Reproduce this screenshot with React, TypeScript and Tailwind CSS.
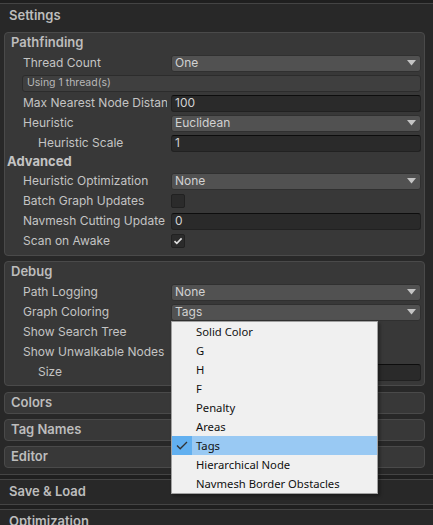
import { ReactNode } from 'react'

const LABEL = 'text-[12px] text-[#c4c4c4]'

function Arrow() {
  return (
    <svg width="9" height="6" viewBox="0 0 9 6" className="shrink-0">
      <polygon points="0,0 9,0 4.5,5.5" fill="#c4c4c4" />
    </svg>
  )
}

function Dropdown({ value }: { value: string }) {
  return (
    <div className="flex h-[17px] flex-1 items-center justify-between rounded-[3px] border border-[#303030] bg-[#515151] pl-[3px] pr-[4px]">
      <span className="text-[12px] leading-none text-[#d2d2d2]">{value}</span>
      <Arrow />
    </div>
  )
}

function TextField({ value }: { value: string }) {
  return (
    <div className="flex h-[17px] flex-1 items-center rounded-[3px] border border-[#212121] border-t-[#0d0d0d] bg-[#2a2a2a] pl-[3px]">
      <span className="text-[12px] leading-none text-[#d2d2d2]">{value}</span>
    </div>
  )
}

function Checkbox({ checked }: { checked?: boolean }) {
  return (
    <div className="flex h-[14px] w-[14px] items-center justify-center rounded-[2px] border border-[#212121] bg-[#2b2b2b]">
      {checked && (
        <svg width="10" height="8" viewBox="0 0 10 8">
          <polyline
            points="1.5,4.2 3.8,6.4 8.6,1.4"
            fill="none"
            stroke="#e0e0e0"
            strokeWidth="1.6"
          />
        </svg>
      )}
    </div>
  )
}

function Row({
  label,
  indent = 18,
  children
}: {
  label: string
  indent?: number
  children: ReactNode
}) {
  return (
    <div className="flex h-5 items-center pr-[3px]">
      <div className="w-[166px] shrink-0 pr-[4px]">
        <div
          className={`overflow-hidden whitespace-nowrap ${LABEL} ${
            indent === 33 ? 'pl-[33px]' : 'pl-[18px]'
          }`}
        >
          {label}
        </div>
      </div>
      <div className="flex flex-1 items-center">{children}</div>
    </div>
  )
}

function Box({ title, children }: { title: string; children?: ReactNode }) {
  return (
    <div className="mr-2 ml-1 rounded-[4px] border border-[#4a4a4a] bg-[#383838]">
      <div className="flex h-5 items-center pl-[6px] text-[13px] font-semibold text-[#bdbdbd]">
        {title}
      </div>
      {children}
    </div>
  )
}

function Separator() {
  return <div className="h-[6px] border-y border-[#444444] bg-[#1f1f1f]" />
}

function SectionHeader({ title }: { title: string }) {
  return (
    <div className="flex h-6 items-center pl-[9px] text-[13px] font-semibold text-[#bdbdbd]">
      {title}
    </div>
  )
}

const MENU = [
  'Solid Color',
  'G',
  'H',
  'F',
  'Penalty',
  'Areas',
  'Tags',
  'Hierarchical Node',
  'Navmesh Border Obstacles'
]

export default function App() {
  return (
    <div
      className="relative h-[525px] w-[433px] overflow-hidden bg-[#282828]"
      style={{ fontFamily: 'Inter, "Noto Sans", sans-serif' }}
    >
      <div className="h-[4px] border-b border-[#444444] bg-[#1f1f1f]" />
      <SectionHeader title="Settings" />

      <div className="flex flex-col pt-1 pb-[6px]">
        {/* Pathfinding */}
        <Box title="Pathfinding">
          <div className="pb-1">
            <Row label="Thread Count">
              <Dropdown value="One" />
            </Row>
            <div className="flex h-5 items-center pr-[3px] pl-[17px]">
              <div className="flex h-[17px] flex-1 items-center rounded-[3px] border border-[#2c2c2c] bg-[#3f3f3f] pl-[4px] text-[10.5px] text-[#b8b8b8]">
                Using 1 thread(s)
              </div>
            </div>
            <Row label="Max Nearest Node Distance">
              <TextField value="100" />
            </Row>
            <Row label="Heuristic">
              <Dropdown value="Euclidean" />
            </Row>
            <Row label="Heuristic Scale" indent={33}>
              <TextField value="1" />
            </Row>
            <div className="flex h-[18px] items-center pl-[2px] text-[13px] font-bold text-[#c4c4c4]">
              Advanced
            </div>
            <Row label="Heuristic Optimization">
              <Dropdown value="None" />
            </Row>
            <Row label="Batch Graph Updates">
              <Checkbox />
            </Row>
            <Row label="Navmesh Cutting Update">
              <TextField value="0" />
            </Row>
            <Row label="Scan on Awake">
              <Checkbox checked />
            </Row>
          </div>
        </Box>

        {/* Debug */}
        <div className="mt-[5px]">
          <Box title="Debug">
            <div className="pb-[3px]">
              <Row label="Path Logging">
                <Dropdown value="None" />
              </Row>
              <Row label="Graph Coloring">
                <Dropdown value="Tags" />
              </Row>
              <Row label="Show Search Tree">
                <Checkbox />
              </Row>
              <Row label="Show Unwalkable Nodes">
                <Checkbox checked />
              </Row>
              <Row label="Size" indent={33}>
                <TextField value="0.3" />
              </Row>
            </div>
          </Box>
        </div>

        <div className="mt-[6px] flex flex-col gap-[5px]">
          <Box title="Colors" />
          <Box title="Tag Names" />
          <Box title="Editor" />
        </div>
      </div>

      <Separator />
      <SectionHeader title="Save & Load" />
      <Separator />
      <SectionHeader title="Optimization" />

      {/* Graph Coloring popup */}
      <div
        className="absolute top-[321px] left-[171px] w-[207px] border border-[#a0a0a0] bg-[#f0f0f0] shadow-[2px_2px_3px_rgba(0,0,0,0.35)]"
        style={{ fontFamily: '"Noto Sans", sans-serif' }}
      >
        {MENU.map((item) => {
          const selected = item === 'Tags'
          return (
            <div
              key={item}
              className={`flex h-[19px] items-center ${selected ? 'bg-[#99c9f3]' : ''}`}
            >
              <div
                className={`flex h-full w-[20px] shrink-0 items-center justify-center ${
                  selected ? 'bg-[#62b0f0]' : ''
                }`}
              >
                {selected && (
                  <svg width="12" height="9" viewBox="0 0 12 9">
                    <polyline
                      points="1,4.5 4.2,7.8 11,1"
                      fill="none"
                      stroke="#333333"
                      strokeWidth="1.3"
                    />
                  </svg>
                )}
              </div>
              <span className="pl-[4px] text-[11.25px] leading-none text-[#111111]">
                {item}
              </span>
            </div>
          )
        })}
      </div>
    </div>
  )
}
